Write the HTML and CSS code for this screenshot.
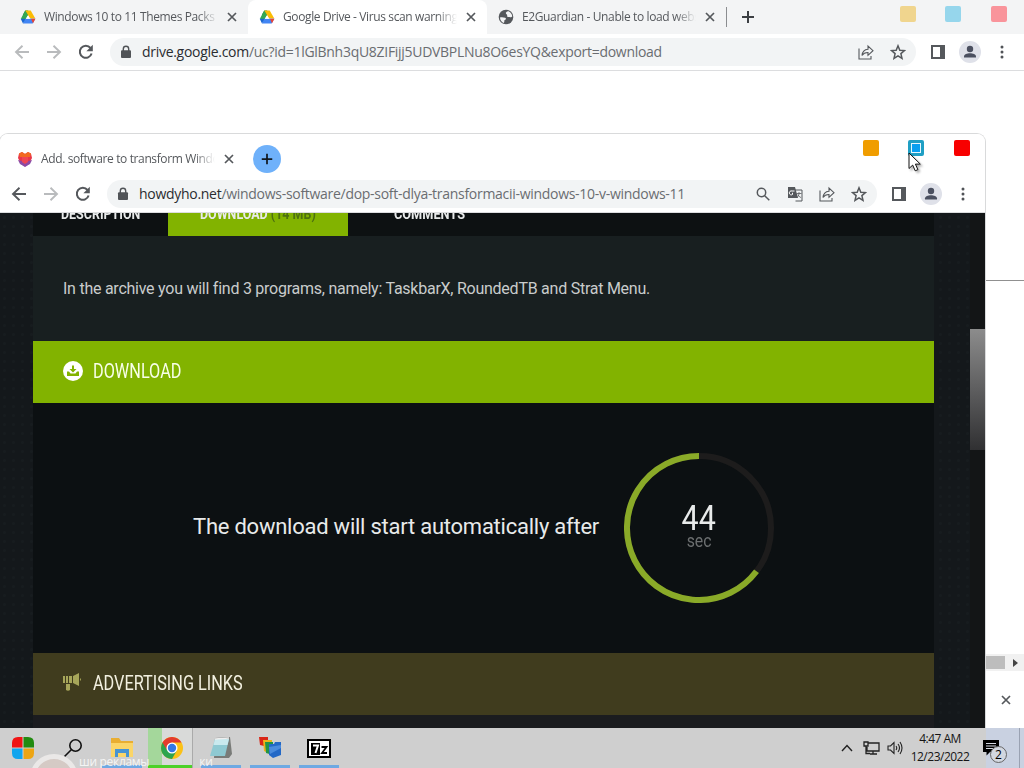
FILE: index.html
```html
<!DOCTYPE html>
<html lang="en">
<head>
  <meta charset="UTF-8">
  <title>Desktop</title>
  <link rel="stylesheet" href="styles.css">
</head>
<body>
<!-- Shared icons -->
<svg class="sprite">
  <symbol id="i-drive" viewBox="0 0 16 16">
    <path fill="#188038" d="M5.3 1.5h2.9L8 6 5.8 8.6 2.9 5.8z"/>
    <path fill="#34a853" d="M5.3 1.5 8 6.2 4.3 12.8 1 9.5z"/>
    <path fill="#fbbc04" d="M5.3 1.5h5.4l4.6 8H10z"/>
    <path fill="#4285f4" d="M4.8 9.8h10.5l-2.6 4.7H3z"/>
    <path fill="#1967d2" d="M.7 9.8h4.6L3 14.5z"/>
    <path fill="#ea4335" d="M11 9.8h4.4L13 14.3z"/>
    <path fill="#fff" d="m8 6.2 2.1 3.6H5.9z"/>
  </symbol>
  <symbol id="i-close" viewBox="0 0 16 16"><path d="m4 4 8 8m0-8-8 8" fill="none" stroke="currentColor" stroke-width="1.7"/></symbol>
  <symbol id="i-plus" viewBox="0 0 16 16"><path d="M8 2v12M2 8h12" fill="none" stroke="currentColor" stroke-width="2"/></symbol>
  <symbol id="i-back" viewBox="0 0 16 16"><path d="M15 8H2m6.5-6.3L2 8l6.5 6.3" fill="none" stroke="currentColor" stroke-width="1.9"/></symbol>
  <symbol id="i-forward" viewBox="0 0 16 16"><path d="M1 8h13M7.5 1.7 14 8l-6.5 6.3" fill="none" stroke="currentColor" stroke-width="1.9"/></symbol>
  <symbol id="i-reload" viewBox="0 0 16 16"><path d="M13.6 9.5A6 6 0 1 1 12.5 4" fill="none" stroke="currentColor" stroke-width="2"/><path d="M14.8.8v6.400H8.400z" fill="currentColor"/></symbol>
  <symbol id="i-lock" viewBox="0 0 12 14"><path d="M2 5.3h8q1 0 1 1V12q0 1-1 1H2q-1 0-1-1V6.3q0-1 1-1" fill="currentColor"/><path d="M3.3 6V4a2.7 2.7 0 0 1 5.400 0v2" fill="none" stroke="currentColor" stroke-width="1.4"/></symbol>
  <symbol id="i-share" viewBox="0 0 16 16"><path d="M1 4.500V15h12v-3M4 11.500C4.300 8 6 5.500 10 5.200V2l5 4.700-5 4.600V8.500C7 8.400 5.300 9.500 4 11.500z" fill="none" stroke="currentColor" stroke-width="1.1"/></symbol>
  <symbol id="i-star" viewBox="0 0 16 16"><path d="m8 1.8 1.8 4.400 4.700.4-3.600 3 1.100 4.700L8 11.800l-4 2.500 1.100-4.700-3.600-3 4.700-.4z" fill="none" stroke="currentColor" stroke-width="1.5"/></symbol>
  <symbol id="i-panel" viewBox="0 0 16 16"><path fill="currentColor" fill-rule="evenodd" d="M1 1h14v14H1zm2 2v10h7V3z"/></symbol>
  <symbol id="i-user" viewBox="0 0 22 22"><circle cx="11" cy="11" r="11" fill="#dfe1e9"/><circle cx="11" cy="8" r="3.2" fill="#4b5060"/><path d="M5 16.500v-1.200c0-2 3.200-3.100 6-3.100s6 1.100 6 3.100v1.200z" fill="#4b5060"/></symbol>
  <symbol id="i-dots" viewBox="0 0 4 14"><g fill="currentColor"><circle cx="2" cy="2" r="1.5"/><circle cx="2" cy="7" r="1.5"/><circle cx="2" cy="12" r="1.5"/></g></symbol>
</svg>

<div class="desktop">

  <!-- Back browser window -->
  <div class="window window-back">
    <div class="tabs">
      <div class="tab">
        <svg class="icon"><use href="#i-drive"/></svg>
        <div class="tab-title">Windows 10 to 11 Themes Packs</div>
        <svg class="icon"><use href="#i-close"/></svg>
      </div>
      <div class="tab active">
        <svg class="icon"><use href="#i-drive"/></svg>
        <div class="tab-title">Google Drive - Virus scan warning</div>
        <svg class="icon"><use href="#i-close"/></svg>
      </div>
      <div class="tab">
        <svg class="icon" viewBox="0 0 16 16"><circle cx="8" cy="8" r="7.3" fill="#55585c"/><path d="M2 8.500c2-.5 3 .2 5 .3 1.500.2 1 2-.5 2.200-.3 1.500 0 2.500-1 3C3.500 13 2 11 2 8.500M8 3.500c1-1 2-1.500 3-1 2 1 3.200 3 3.200 5-1 1.500-2 .2-3 .5-1.500.3-2.500-.5-2-1.500.4-1-2-1.500-1.200-3" fill="#f3f4f5"/></svg>
        <div class="tab-title">E2Guardian - Unable to load website</div>
        <svg class="icon"><use href="#i-close"/></svg>
      </div>
      <div class="tab-divider"></div>
      <svg class="icon add"><use href="#i-plus"/></svg>
      <div class="controls"><i class="min"></i><i class="max"></i><i class="quit"></i></div>
    </div>
    <div class="toolbar">
      <svg class="icon dim"><use href="#i-back"/></svg>
      <svg class="icon dim"><use href="#i-forward"/></svg>
      <svg class="icon"><use href="#i-reload"/></svg>
      <div class="address">
        <svg class="lock"><use href="#i-lock"/></svg>
        <span class="url"><b>drive.google.com</b>/uc?id=1lGlBnh3qU8ZIFijj5UDVBPLNu8O6esYQ&amp;export=download</span>
        <svg class="icon"><use href="#i-share"/></svg>
        <svg class="icon"><use href="#i-star"/></svg>
      </div>
      <svg class="icon"><use href="#i-panel"/></svg>
      <svg class="user"><use href="#i-user"/></svg>
      <svg class="dots"><use href="#i-dots"/></svg>
    </div>
    <div class="blank"><div class="rule"></div></div>
    <div class="hscroll"><i></i><svg viewBox="0 0 6 8"><path d="M0 0v8l5-4z" fill="#444"/></svg></div>
    <div class="shelf"><svg class="icon"><use href="#i-close"/></svg></div>
  </div>

  <!-- Front browser window -->
  <div class="window window-front">
    <div class="tabs">
      <div class="tab">
        <svg class="icon" viewBox="0 0 16 16"><path d="M2 2.500 5 1l3 2 3-2 3 1.500L15 7l-2 4-5 4.500L3 11 1 7z" fill="#e8374a"/><path d="M2 2.500 5 1l3 2 3-2 3 1.500-1 3.500H3z" fill="#f26a21"/><path d="m1 9 4 1 3 2 3-2 4-1-2 4-5 3-5-3z" fill="#8a4aa5"/><path d="M5 6h6v5l-3 2-3-2z" fill="#ee4655"/></svg>
        <div class="tab-title">Add. software to transform Windows</div>
        <svg class="icon"><use href="#i-close"/></svg>
      </div>
      <div class="new-tab"><svg><use href="#i-plus"/></svg></div>
      <div class="controls"><i class="min"></i><i class="max"></i><i class="quit"></i></div>
    </div>
    <div class="toolbar">
      <svg class="icon"><use href="#i-back"/></svg>
      <svg class="icon dim"><use href="#i-forward"/></svg>
      <svg class="icon"><use href="#i-reload"/></svg>
      <div class="address">
        <svg class="lock"><use href="#i-lock"/></svg>
        <span class="url"><b>howdyho.net</b>/windows-software/dop-soft-dlya-transformacii-windows-10-v-windows-11</span>
        <svg class="icon" viewBox="0 0 16 16"><g fill="none" stroke="currentColor" stroke-width="1.5"><circle cx="6.500" cy="6.500" r="4.2"/><path d="m9.700 9.700 4.600 4.600"/></g></svg>
        <svg class="icon" viewBox="0 0 16 16"><path d="M7 4h8v11H8.500" fill="none" stroke="currentColor"/><path d="M1 1h7l3 11H1z" fill="currentColor"/><path d="M7.500 5H5a2 2 0 1 0 .5 3.500V7H5" fill="none" stroke="#fff"/><path d="M9.500 7.500h5M12 6v1.500c0 2-1 3-2 4m1-3c.5 1.500 1.500 2.500 3 3" fill="none" stroke="currentColor" stroke-width=".8"/></svg>
        <svg class="icon"><use href="#i-share"/></svg>
        <svg class="icon"><use href="#i-star"/></svg>
      </div>
      <svg class="icon"><use href="#i-panel"/></svg>
      <svg class="user"><use href="#i-user"/></svg>
      <svg class="dots"><use href="#i-dots"/></svg>
    </div>

    <div class="page">
      <div class="column">
        <div class="page-tabs">
          <div class="page-tab tab-desc"><span>DESCRIPTION</span></div>
          <div class="page-tab tab-down"><span>DOWNLOAD <em>(14 MB)</em></span></div>
          <div class="page-tab tab-comm"><span>COMMENTS</span></div>
        </div>
        <div class="intro"><span>In the archive you will find 3 programs, namely: TaskbarX, RoundedTB and Strat Menu.</span></div>
        <div class="heading">
          <svg viewBox="0 0 20 20"><circle cx="10" cy="10" r="10" fill="#fff"/><path d="M9 4.500h2V8h2.500L10 11.500 6.500 8H9zM4 10.500h2l1.500 2h5l1.500-2h2V15H4z" fill="#82b300"/></svg>
          <span>DOWNLOAD</span>
        </div>
        <div class="countdown">
          <span class="wait">The download will start automatically after</span>
          <div class="timer">
            <svg viewBox="0 0 150 150" fill="none" stroke-width="6">
              <circle cx="75" cy="75" r="72" stroke="#1d1c1c"/>
              <path d="M75 3A72 72 0 1 0 132.500 118.300" stroke="#8aaa28"/>
            </svg>
            <div class="timer-text"><span class="num">44</span><span class="sec">sec</span></div>
          </div>
        </div>
        <div class="heading ads">
          <svg viewBox="0 0 20 20" fill="#a7a65a"><path d="M0 3h2v7H0zM3 3h2v7H3zM6 3h3v7H6zM10 3l6-3v13l-6-3zM17 5q2 1.500 0 3zM3 11h4v6q-2 1.500-4 0z"/></svg>
          <span>ADVERTISING LINKS</span>
        </div>
        <div class="rest"></div>
      </div>
      <div class="vscroll"><i></i></div>
    </div>
  </div>

  <!-- Mouse pointer -->
  <svg class="cursor" viewBox="0 0 14 20"><path d="M1 1v15.500l3.700-3.400 2.500 5.700 2.700-1.200-2.500-5.500h4.900z" fill="#fff" stroke="#111"/></svg>

  <!-- Taskbar -->
  <div class="taskbar">
    <div class="task start"><svg viewBox="0 0 22 22"><path d="M10.500 0v10.500H0V6q0-6 6-6z" fill="#f01414"/><path d="M11.500 0H16q6 0 6 6v4.500H11.500z" fill="#228b10"/><path d="M0 11.500h10.500V22H6q-6 0-6-6z" fill="#12a5ee"/><path d="M11.500 11.500H22V16q0 6-6 6h-4.500z" fill="#eda513"/></svg></div>
    <div class="task"><svg viewBox="0 0 22 22" fill="none" stroke="#111" stroke-width="1.6"><circle cx="13.500" cy="8.500" r="5.7"/><path d="m9.500 12.500-7 7"/></svg></div>
    <div class="task open"><svg viewBox="0 0 22 22"><path d="M0 1h8l2 3h12v16H0z" fill="#e9ae32"/><path d="M0 6h22v14H0z" fill="#fbd568"/><path d="M4 20v-8h14v8h-3v-4H7v4z" fill="#4894d3"/></svg></div>
    <div class="task chrome"><svg viewBox="0 0 22 22"><circle cx="11" cy="11" r="11" fill="#fbc116"/><path d="M1.500 5.500A11 11 0 0 0 11 22l4.500-8L11 11z" fill="#2da44e"/><path d="M11 5.500h9.500a11 11 0 0 0-19-.1L6 13z" fill="#e33b2e"/><circle cx="11" cy="11" r="5.5" fill="#fff"/><circle cx="11" cy="11" r="4.2" fill="#3478e5"/></svg></div>
    <div class="task open"><svg viewBox="0 0 22 22"><path d="m5 1 15-1 2 17-3 4H4z" fill="#797b78"/><path d="M5 2h14l-4 17H0z" fill="#8ec9d2"/><path d="M5 2h14l-1.500 6H3.500z" fill="#c9e9ee"/><path d="m5 2 14-1" stroke="#eee" stroke-width="1.5"/></svg></div>
    <div class="task open"><svg viewBox="0 0 22 22"><path d="M0 0h9v5H5v4l-4-1z" fill="#d92617"/><path d="M4 3h9v5H9v8l-4-2z" fill="#edb51b"/><path d="M6 5h8v13l-7-2z" fill="#219447"/><path d="M10 7h5l1-2h6v13l-8 3-4-3z" fill="#2368c6"/><path d="m10 10 12-2v3l-11 6z" fill="#4a8bdc"/></svg></div>
    <div class="task open"><svg class="zip" viewBox="0 0 24 19"><path d="M1 1h22v17H1z" fill="#fff" stroke="#000" stroke-width="2"/><path d="M4 4h9v12H4z"/><path d="M6 6.500h5L8.500 14" fill="none" stroke="#fff" stroke-width="2"/><path d="M14.500 8h5l-4.500 6h5" fill="none" stroke="#000" stroke-width="1.8"/></svg></div>
    <div class="tray">
      <svg class="chev" viewBox="0 0 12 8"><path d="m1 7 5-5.500L11 7" fill="none" stroke="#222" stroke-width="1.4"/></svg>
      <svg class="net" viewBox="0 0 17 14"><path d="M5 2h11v8H4V6M1 1h4v4H1zm2 4v7.500h4M10 10v2.500M7 13h7" fill="none" stroke="#222" stroke-width="1.3"/></svg>
      <svg class="snd" viewBox="0 0 16 14"><path d="M1 5v4h2.500L7 12.500v-11L3.500 5zM9 5q1.500 2 0 4m2-6q3 4 0 8m2-10q4 6 0 12" fill="none" stroke="#222" stroke-width="1.1"/></svg>
      <div class="clock"><span>4:47 AM</span><span>12/23/2022</span></div>
      <div class="notify">
        <svg viewBox="0 0 16 16"><path d="M0 0h16v12H7l-3.500 3.500V12H0z"/><path d="M3 3.500h10M3 6h10M3 8.500h7" stroke="#d5d9e2"/></svg>
        <span class="badge">2</span>
      </div>
    </div>
  </div>
  <div class="watermark"><span class="w1">ши рекламы</span><span class="w2">ки</span></div>
</div>
</body>
</html>
```

FILE: styles.css
```css
body {
  margin: 0;
  background: #fff;
  font-family: "Open Sans", "Noto Sans", sans-serif;
}

.sprite {
  display: none;
}

.desktop {
  position: relative;
  width: 1024px;
  height: 768px;
  overflow: hidden;
}

.desktop svg {
  flex: none;
}

/* Browser windows */
.window {
  position: absolute;
  display: flex;
  flex-direction: column;
  box-sizing: border-box;
  background: #fff;
  overflow: hidden;
}

.window-back {
  top: 0;
  left: 0;
  width: 1024px;
  height: 728px;
}

.window-front {
  top: 133px;
  left: -1px;
  width: 987px;
  height: 595px;
  border: 1px solid #d9dadb;
  border-bottom: 0;
  border-radius: 9px 9px 0 0;
}

/* Tab strip */
.tabs {
  display: flex;
  align-items: center;
  flex: none;
  height: 34px;
  padding-left: 9px;
  background: #f3f4f5;
}

.tab {
  display: flex;
  align-items: center;
  box-sizing: border-box;
  width: 239px;
  height: 34px;
  padding-left: 11px;
}

.tab.active {
  background: #fff;
  border-radius: 8px 8px 0 0;
}

.icon {
  width: 16px;
  height: 16px;
  color: #55585c;
}

.tab-title {
  width: 174px;
  margin: 0 6px 0 8px;
  overflow: hidden;
  white-space: nowrap;
  font-size: 12px;
  line-height: 18px;
  letter-spacing: -.38px;
  color: #55585c;
  -webkit-mask-image: linear-gradient(to right, #000 88%, transparent);
  mask-image: linear-gradient(to right, #000 88%, transparent);
}

.tab-divider {
  width: 1px;
  height: 20px;
  background: #8b8d90;
}

.add {
  margin-left: 13px;
  color: #3c3f43;
}

.controls {
  display: flex;
  gap: 29px;
  margin: -7px 17px 0 auto;
}

.controls i {
  box-sizing: border-box;
  width: 16px;
  height: 16px;
  border-radius: 2px;
}

.controls .quit {
  margin-left: 1px;
}

.window-back .min { background: #f0d58e; }
.window-back .max { background: #96d6ec; }
.window-back .quit { background: #f9949b; }

.window-front .tabs {
  height: 42px;
  padding-left: 6px;
  background: #fff;
}

.window-front .tab {
  height: 50px;
  padding-top: 8px;
}

.new-tab {
  display: flex;
  align-items: center;
  justify-content: center;
  width: 28px;
  height: 28px;
  margin: 8px 0 0 8px;
  border-radius: 50%;
  background: #6fb1fa;
}

.new-tab svg {
  width: 14px;
  height: 14px;
  color: #111820;
}

.window-front .controls {
  margin: -14px 15px 0 auto;
}

.window-front .min { background: #f09d00; }
.window-front .max {
  border: 3px solid #1f9fc4;
  background: #089ff0;
  box-shadow: inset 0 0 0 1px #e4f6ff;
}
.window-front .quit { background: #f80000; }

/* Toolbar */
.toolbar {
  display: flex;
  align-items: center;
  flex: none;
  gap: 16px;
  height: 36px;
  padding: 0 20px 0 14px;
  border-bottom: 1px solid #dcdddf;
}

.window-front .toolbar {
  padding-left: 11px;
}

.dim {
  color: #b9bbbd;
}

.address {
  display: flex;
  align-items: center;
  flex: 1;
  gap: 16px;
  height: 28px;
  margin-right: -2px;
  padding: 0 10px;
  border-radius: 14px;
  background: #f2f4f5;
}

.lock {
  width: 12px;
  height: 14px;
  margin-right: -6px;
  color: #505357;
}

.url {
  flex: 1;
  white-space: nowrap;
  font-size: 14px;
  line-height: 20px;
  letter-spacing: -.29px;
  color: #6a6d71;
}

.url b {
  font-weight: normal;
  color: #2a2c30;
}

.user {
  width: 22px;
  height: 22px;
  margin-left: -3px;
}

.dots {
  width: 4px;
  height: 14px;
  margin-left: 3px;
  color: #505357;
}

/* Back window body */
.blank {
  flex: 1;
}

.rule {
  height: 1px;
  margin-top: 209px;
  background: #909090;
}

.hscroll {
  display: flex;
  align-items: center;
  justify-content: flex-end;
  height: 17px;
  background: #f1f1f1;
}

.hscroll i {
  width: 40px;
  height: 13px;
  background: #bdbdbd;
}

.hscroll svg {
  width: 6px;
  height: 8px;
  margin: 0 5px 0 8px;
}

.shelf {
  display: flex;
  align-items: center;
  justify-content: flex-end;
  height: 57px;
  padding-right: 10px;
}

/* Site page */
.page {
  display: flex;
  flex: 1;
  min-height: 0;
  background: radial-gradient(#171c1f 20%, transparent 25%) 0 0 / 9px 9px, #14181b;
  font-family: Roboto, "Liberation Sans", sans-serif;
  color: #e8eaea;
}

.column {
  display: flex;
  flex-direction: column;
  width: 901px;
  margin-left: 33px;
}

.column span {
  display: block;
  white-space: nowrap;
  transform-origin: left center;
}

.page-tabs {
  display: flex;
  height: 23px;
  overflow: hidden;
  background: #0d1112;
  font-size: 14px;
  font-weight: bold;
  line-height: 16px;
}

.page-tab {
  box-sizing: border-box;
}

.page-tab span {
  margin-top: -7px;
  transform: scaleX(.89);
}

.page-tab em {
  font-style: normal;
  color: #4d7010;
}

.tab-desc { width: 135px; padding-left: 28px; }
.tab-down { width: 180px; padding-left: 32px; background: #82b300; }
.tab-comm { padding-left: 46px; }

.tab-comm span {
  transform: scaleX(.91);
}

.intro {
  display: flex;
  align-items: center;
  height: 105px;
  padding-left: 30px;
  background: #181f20;
  font-size: 16px;
  letter-spacing: -.25px;
  color: #c9cccc;
}

.heading {
  display: flex;
  align-items: center;
  gap: 10px;
  box-sizing: border-box;
  height: 62px;
  padding: 0 0 2px 30px;
  background: #82b300;
  font-size: 20px;
  color: #f8ffe8;
}

.heading svg {
  width: 20px;
  height: 20px;
}

.heading span {
  transform: scaleX(.813);
}

.ads {
  background: #403c1e;
  color: #f2f0e0;
}

.countdown {
  display: flex;
  align-items: center;
  height: 250px;
  padding-left: 160px;
  background: #0c1012;
}

.wait {
  width: 431px;
  margin-top: -3px;
  font-size: 22px;
  letter-spacing: -.24px;
}

.timer {
  display: grid;
  place-items: center;
  width: 150px;
  height: 150px;
}

.timer > * {
  grid-area: 1 / 1;
}

.timer svg {
  width: 150px;
  height: 150px;
}

.timer-text {
  display: flex;
  flex-direction: column;
  align-items: center;
}

.column .timer-text span {
  transform-origin: center;
}

.num {
  font-size: 35px;
  line-height: 30px;
  transform: scaleX(.87);
}

.sec {
  margin: -2px 0 2px;
  font-size: 18px;
  line-height: 18px;
  color: #6c6f70;
  transform: scaleX(.88);
}

.rest {
  flex: 1;
  background: #1b1c1f;
}

.vscroll {
  width: 15px;
  margin-left: auto;
  background: #131516;
}

.vscroll i {
  display: block;
  height: 121px;
  margin-top: 116px;
  background: linear-gradient(#8c8c8c, #303032);
}

/* Pointer */
.cursor {
  position: absolute;
  left: 908px;
  top: 152px;
  width: 14px;
  height: 20px;
  filter: drop-shadow(2px 2px 1px rgba(0, 0, 0, .3));
}

/* Taskbar */
.taskbar {
  position: absolute;
  left: 0;
  top: 728px;
  display: flex;
  box-sizing: border-box;
  width: 1024px;
  height: 40px;
  background: linear-gradient(to right, #cfcfcf 986px, #c9d1e1 986px);
}

.task {
  display: flex;
  align-items: center;
  justify-content: center;
  box-sizing: border-box;
  width: 49px;
  height: 40px;
}

.task svg {
  width: 22px;
  height: 22px;
}

.task .zip {
  width: 24px;
  height: 19px;
}

.start {
  width: 48px;
  padding-right: 2px;
}

.open {
  background: linear-gradient(#6fa9e2, #6fa9e2) center bottom / 40px 3px no-repeat;
}

.chrome {
  width: 45px;
  margin: 0 3px 0 2px;
  padding-left: 4px;
  background: linear-gradient(#4cd128, #4cd128) left bottom / 100% 3px no-repeat, linear-gradient(to right, #a4d79b 14px, #d9dad9 14px);
  border-right: 1px solid #aaa;
}

.tray {
  display: flex;
  align-items: center;
  margin-left: auto;
  margin-right: 4px;
  padding-right: 9px;
  border-right: 1px solid #9aa2b2;
}

.chev { width: 12px; height: 8px; }
.net { width: 17px; height: 14px; margin-left: 10px; }
.snd { width: 16px; height: 14px; margin-left: 7px; }

.clock {
  display: flex;
  flex-direction: column;
  align-items: center;
  width: 74px;
  font-size: 12px;
  line-height: 18px;
  color: #151515;
}

.clock span {
  white-space: nowrap;
  letter-spacing: -.5px;
}

.notify {
  position: relative;
  width: 27px;
  height: 18px;
  margin-left: 6px;
}

.notify svg {
  width: 16px;
  height: 16px;
}

.badge {
  position: absolute;
  left: 7px;
  top: 7px;
  box-sizing: border-box;
  width: 17px;
  height: 17px;
  border: 1px solid #666;
  border-radius: 50%;
  background: #d2d7e0;
  font-size: 12px;
  line-height: 15px;
  text-align: center;
}

/* Channel watermark */
.watermark {
  position: absolute;
  left: 30px;
  top: 753px;
  width: 240px;
  height: 15px;
  overflow: hidden;
  font-size: 12px;
  line-height: 17px;
  letter-spacing: -.3px;
  color: rgba(255, 255, 255, .8);
}

.watermark::before {
  content: "";
  position: absolute;
  left: 0;
  top: 1px;
  box-sizing: border-box;
  width: 48px;
  height: 48px;
  border: 5px solid rgba(240, 240, 240, .8);
  border-radius: 50%;
  background: rgba(215, 200, 192, .7);
}

.w1 { margin-left: 49px; }
.w2 { margin-left: 50px; }
```
